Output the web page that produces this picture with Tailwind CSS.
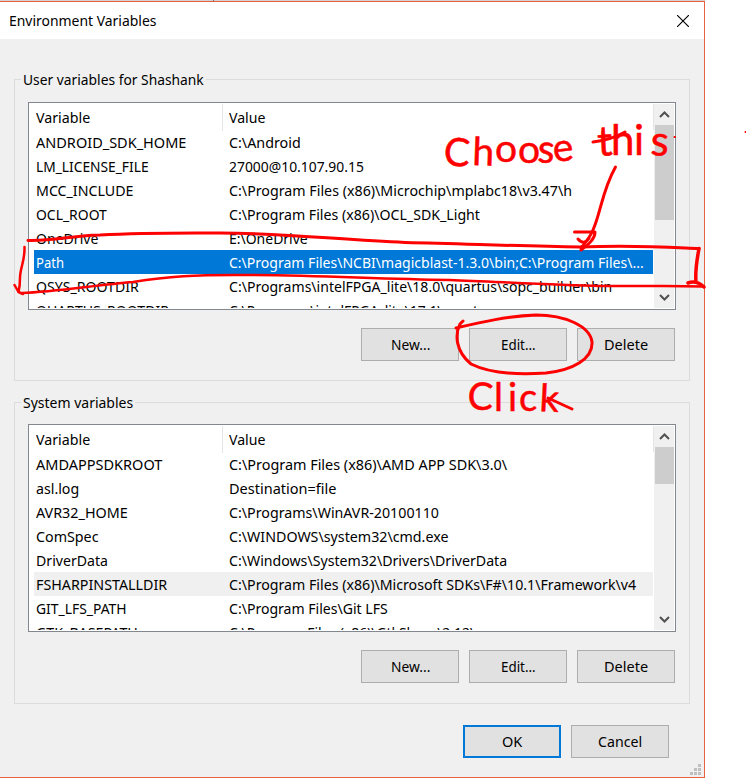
<!DOCTYPE html>
<html lang="en">
<head>
<meta charset="utf-8">
<title>Environment Variables</title>
<script src="https://cdn.jsdelivr.net/npm/@tailwindcss/browser@4"></script>
</head>
<body class="relative h-[778px] w-[746px] overflow-hidden bg-white font-['Noto_Sans',sans-serif] text-[14.5px] leading-6 text-black">
<div class="h-px w-[705px] bg-[#d2d2d2]"></div>
<main class="flex h-[777px] w-[705px] flex-col border-t border-r border-b border-[#e8613f] bg-[#f0f0f0]">
  <header class="flex h-[37px] shrink-0 items-center justify-between bg-white pr-[15px] pl-[9px]">
    <h1 class="pb-[2px]"><span class="inline-block origin-left text-left whitespace-nowrap" data-w="147">Environment Variables</span></h1>
    <svg class="h-3 w-3" viewBox="0 0 12 12" fill="none" stroke="#000" stroke-width="1.15"><path d="M0 0L12 12M12 0L0 12"/></svg>
  </header>

  <section class="mt-10 ml-[14px] h-[302px] w-[676px] shrink-0 border border-[#dcdcdc] px-[13px]">
    <h2 class="-mt-[13px] -ml-[7px] h-6 w-fit bg-[#f0f0f0] px-[2px]"><span class="inline-block origin-left text-left whitespace-nowrap" data-w="181">User variables for Shashank</span></h2>
    <div class="mt-[11px] flex h-[208px] w-[648px] border border-[#828790] bg-white p-px">
      <div class="h-[204px] w-[624px] overflow-hidden pl-1">
        <div class="grid h-[26px] grid-cols-[189px_1fr] border-r border-[#e5e5e5] leading-[27px]"><div class="border-r border-[#e5e5e5] pl-[2px]"><span class="inline-block origin-left text-left whitespace-nowrap" data-w="54">Variable</span></div><div class="pl-[6px]"><span class="inline-block origin-left text-left whitespace-nowrap" data-w="36">Value</span></div></div>
        <div class="grid h-6 grid-cols-[193px_1fr] pl-[2px]"><div><span class="inline-block origin-left text-left whitespace-nowrap" data-w="150">ANDROID_SDK_HOME</span></div><div><span class="inline-block origin-left text-left whitespace-nowrap" data-w="72">C:\Android</span></div></div>
        <div class="grid h-6 grid-cols-[193px_1fr] pl-[2px]"><div><span class="inline-block origin-left text-left whitespace-nowrap" data-w="113">LM_LICENSE_FILE</span></div><div><span class="inline-block origin-left text-left whitespace-nowrap" data-w="135">27000@10.107.90.15</span></div></div>
        <div class="grid h-6 grid-cols-[193px_1fr] pl-[2px]"><div><span class="inline-block origin-left text-left whitespace-nowrap" data-w="97">MCC_INCLUDE</span></div><div><span class="inline-block origin-left text-left whitespace-nowrap" data-w="343">C:\Program Files (x86)\Microchip\mplabc18\v3.47\h</span></div></div>
        <div class="grid h-6 grid-cols-[193px_1fr] pl-[2px]"><div><span class="inline-block origin-left text-left whitespace-nowrap" data-w="71">OCL_ROOT</span></div><div><span class="inline-block origin-left text-left whitespace-nowrap" data-w="251">C:\Program Files (x86)\OCL_SDK_Light</span></div></div>
        <div class="grid h-6 grid-cols-[193px_1fr] pl-[2px]"><div><span class="inline-block origin-left text-left whitespace-nowrap" data-w="62">OneDrive</span></div><div><span class="inline-block origin-left text-left whitespace-nowrap" data-w="79">E:\OneDrive</span></div></div>
        <div class="mr-px grid h-6 grid-cols-[193px_1fr] bg-[#0078d7] pl-[2px] text-white"><div><span class="inline-block origin-left text-left whitespace-nowrap" data-w="28">Path</span></div><div><span class="inline-block origin-left text-left whitespace-nowrap" data-w="415">C:\Program Files\NCBI\magicblast-1.3.0\bin;C:\Program Files\...</span></div></div>
        <div class="grid h-6 grid-cols-[193px_1fr] pl-[2px]"><div><span class="inline-block origin-left text-left whitespace-nowrap" data-w="103">QSYS_ROOTDIR</span></div><div><span class="inline-block origin-left text-left whitespace-nowrap" data-w="383">C:\Programs\intelFPGA_lite\18.0\quartus\sopc_builder\bin</span></div></div>
        <div class="grid h-6 grid-cols-[193px_1fr] pl-[2px]"><div><span class="inline-block origin-left text-left whitespace-nowrap" data-w="133">QUARTUS_ROOTDIR</span></div><div><span class="inline-block origin-left text-left whitespace-nowrap" data-w="264">C:\Programs\intelFPGA_lite\17.1\quartus</span></div></div>
      </div>
      <div class="flex h-[204px] w-5 flex-col items-center bg-[#f0f0f0]">
        <svg class="h-[21px] w-[19px] shrink-0" viewBox="0 0 19 21" fill="none" stroke="#505050" stroke-width="2"><path d="M5 13L9.5 8.5L14 13"/></svg>
        <div class="h-[95px] w-[19px] bg-[#cdcdcd]"></div>
        <svg class="mt-auto h-[21px] w-[19px]" viewBox="0 0 19 21" fill="none" stroke="#505050" stroke-width="2"><path d="M5 8L9.5 12.5L14 8"/></svg>
      </div>
    </div>
    <div class="mt-[18px] ml-[333px] flex gap-[10px] text-center leading-[31px]">
      <button class="h-[33px] w-[98px] border border-[#adadad] bg-[#e1e1e1]"><span class="inline-block origin-left text-left whitespace-nowrap" data-w="39">New...</span></button>
      <button class="h-[33px] w-[98px] border border-[#adadad] bg-[#e1e1e1]"><span class="inline-block origin-left text-left whitespace-nowrap" data-w="35">Edit...</span></button>
      <button class="h-[33px] w-[98px] border border-[#adadad] bg-[#e1e1e1]"><span class="inline-block origin-left text-left whitespace-nowrap" data-w="44">Delete</span></button>
    </div>
  </section>

  <section class="mt-[21px] ml-[14px] h-[302px] w-[676px] shrink-0 border border-[#dcdcdc] px-[13px]">
    <h2 class="-mt-[13px] -ml-[7px] h-6 w-fit bg-[#f0f0f0] px-[2px]"><span class="inline-block origin-left text-left whitespace-nowrap" data-w="110">System variables</span></h2>
    <div class="mt-[10px] flex h-[208px] w-[648px] border border-[#828790] bg-white p-px">
      <div class="h-[204px] w-[624px] overflow-hidden pl-1">
        <div class="grid h-[26px] grid-cols-[189px_1fr] border-r border-[#e5e5e5] leading-[27px]"><div class="border-r border-[#e5e5e5] pl-[2px]"><span class="inline-block origin-left text-left whitespace-nowrap" data-w="54">Variable</span></div><div class="pl-[6px]"><span class="inline-block origin-left text-left whitespace-nowrap" data-w="36">Value</span></div></div>
        <div class="grid h-6 grid-cols-[193px_1fr] pl-[2px]"><div><span class="inline-block origin-left text-left whitespace-nowrap" data-w="126">AMDAPPSDKROOT</span></div><div><span class="inline-block origin-left text-left whitespace-nowrap" data-w="278">C:\Program Files (x86)\AMD APP SDK\3.0\</span></div></div>
        <div class="grid h-6 grid-cols-[193px_1fr] pl-[2px]"><div><span class="inline-block origin-left text-left whitespace-nowrap" data-w="43">asl.log</span></div><div><span class="inline-block origin-left text-left whitespace-nowrap" data-w="107">Destination=file</span></div></div>
        <div class="grid h-6 grid-cols-[193px_1fr] pl-[2px]"><div><span class="inline-block origin-left text-left whitespace-nowrap" data-w="92">AVR32_HOME</span></div><div><span class="inline-block origin-left text-left whitespace-nowrap" data-w="210">C:\Programs\WinAVR-20100110</span></div></div>
        <div class="grid h-6 grid-cols-[193px_1fr] pl-[2px]"><div><span class="inline-block origin-left text-left whitespace-nowrap" data-w="63">ComSpec</span></div><div><span class="inline-block origin-left text-left whitespace-nowrap" data-w="219">C:\WINDOWS\system32\cmd.exe</span></div></div>
        <div class="grid h-6 grid-cols-[193px_1fr] pl-[2px]"><div><span class="inline-block origin-left text-left whitespace-nowrap" data-w="72">DriverData</span></div><div><span class="inline-block origin-left text-left whitespace-nowrap" data-w="278">C:\Windows\System32\Drivers\DriverData</span></div></div>
        <div class="mr-px grid h-6 grid-cols-[193px_1fr] bg-[#f0f0f0] pl-[2px]"><div><span class="inline-block origin-left text-left whitespace-nowrap" data-w="131">FSHARPINSTALLDIR</span></div><div><span class="inline-block origin-left text-left whitespace-nowrap" data-w="407">C:\Program Files (x86)\Microsoft SDKs\F#\10.1\Framework\v4</span></div></div>
        <div class="grid h-6 grid-cols-[193px_1fr] pl-[2px]"><div><span class="inline-block origin-left text-left whitespace-nowrap" data-w="91">GIT_LFS_PATH</span></div><div><span class="inline-block origin-left text-left whitespace-nowrap" data-w="159">C:\Program Files\Git LFS</span></div></div>
        <div class="grid h-6 grid-cols-[193px_1fr] pl-[2px]"><div><span class="inline-block origin-left text-left whitespace-nowrap" data-w="102">GTK_BASEPATH</span></div><div><span class="inline-block origin-left text-left whitespace-nowrap" data-w="246">C:\Program Files (x86)\GtkSharp\2.12\</span></div></div>
      </div>
      <div class="flex h-[204px] w-5 flex-col items-center bg-[#f0f0f0]">
        <svg class="h-[21px] w-[19px] shrink-0" viewBox="0 0 19 21" fill="none" stroke="#505050" stroke-width="2"><path d="M5 13L9.5 8.5L14 13"/></svg>
        <div class="h-[37px] w-[19px] bg-[#cdcdcd]"></div>
        <svg class="mt-auto h-[21px] w-[19px]" viewBox="0 0 19 21" fill="none" stroke="#505050" stroke-width="2"><path d="M5 8L9.5 12.5L14 8"/></svg>
      </div>
    </div>
    <div class="mt-[18px] ml-[333px] flex gap-[10px] text-center leading-[31px]">
      <button class="h-[33px] w-[98px] border border-[#adadad] bg-[#e1e1e1]"><span class="inline-block origin-left text-left whitespace-nowrap" data-w="39">New...</span></button>
      <button class="h-[33px] w-[98px] border border-[#adadad] bg-[#e1e1e1]"><span class="inline-block origin-left text-left whitespace-nowrap" data-w="35">Edit...</span></button>
      <button class="h-[33px] w-[98px] border border-[#adadad] bg-[#e1e1e1]"><span class="inline-block origin-left text-left whitespace-nowrap" data-w="44">Delete</span></button>
    </div>
  </section>

  <footer class="mt-[21px] flex flex-1 gap-[10px] pl-[463px] text-center">
    <button class="h-[33px] w-[98px] border-2 border-[#0078d7] bg-[#e1e1e1] leading-[29px]"><span class="inline-block origin-left text-left whitespace-nowrap" data-w="20">OK</span></button>
    <button class="h-[33px] w-[98px] border border-[#adadad] bg-[#e1e1e1] leading-[31px]"><span class="inline-block origin-left text-left whitespace-nowrap" data-w="44">Cancel</span></button>
    <svg class="mr-[3px] mb-[2px] ml-auto h-[11px] w-[11px] self-end" viewBox="0 0 11 11" fill="#bfbfbf"><path d="M8 0h3v3h-3zM4 4h3v3h-3zM8 4h3v3h-3zM0 8h3v3h-3zM4 8h3v3h-3zM8 8h3v3h-3z"/></svg>
  </footer>
</main>

<!-- Hand-drawn annotations -->
<svg class="pointer-events-none absolute top-0 left-0 h-[778px] w-[746px]" viewBox="0 0 746 778" fill="none" stroke="#fe0000" stroke-width="3" stroke-linecap="round" stroke-linejoin="round">
  <path d="M213.500 0V1" stroke="#777" stroke-width="1"/>
  <path d="M28 240.500C58 241 66 236 100 235C145 232.500 181 233 220 233C285 233 341 240 405 242.500C470 244 518 246 580 247C635 245 664 247 699 248.500"/>
  <path d="M699 248.500C697 259 695 271 696 282M688 283Q696 280 704 287" stroke-width="3.500"/>
  <path d="M22 293C55 292 96 285 133 282C170 276 196 275 235 275C320 275 370 279 450 280C501 282 554 285 600 286C640 286 668 286 704 286.500" stroke-width="2.500"/>
  <path d="M24.500 247C25 261 20 268 20 278Q20 286 18.500 292M14.500 285L18.500 292L23 294" stroke-width="2.500"/>
  <path d="M615.500 167C602 191 601 212 593 230Q589 239 581 248"/>
  <path d="M574.500 232H595C595 239 589 244 581 250M578 239Q584 246 589 238"/>
  <path d="M456 328C482 322 508 316 536 315C565 315 590 326 592 342C593 359 573 370 546 373C517 375 489 373 471 364C455 351 455 334 460 324L463 321"/>
  <path d="M674.500 137H675M745.500 132H746" stroke-width="2"/>
  <g fill="#fe0000" stroke-width="0.500" font-family="Lato, sans-serif" font-weight="400">
    <text font-size="39" x="443 472 495 518 537 554" y="165 165 162 163 162 162" rotate="4 2 0 0 4 -6">Choose</text>
    <text font-size="42" x="598 611 634 650" y="156 155 155 155" rotate="-3 0 0 3">this</text>
    <text font-size="38" x="467 494 508 519 539" y="409 411 411 411 411" rotate="3 0 0 0 3">Click</text>
  </g>
  <path d="M593 142Q611 140 625 132M548 398L572 409"/>
</svg>
<script>
  // Fit each label to its intended width, again whenever the layout changes.
  function fitLabels() {
    for (const s of document.querySelectorAll('[data-w]')) {
      s.style.width = 'auto';
      const natural = s.offsetWidth, w = Number(s.dataset.w);
      s.style.width = w + 'px';
      s.style.transform = `scaleX(${w / natural})`;
    }
  }
  new ResizeObserver(fitLabels).observe(document.querySelector('main'));
  window.addEventListener('load', () => requestAnimationFrame(fitLabels));
  document.fonts.ready.then(fitLabels);
</script>
</body>
</html>
